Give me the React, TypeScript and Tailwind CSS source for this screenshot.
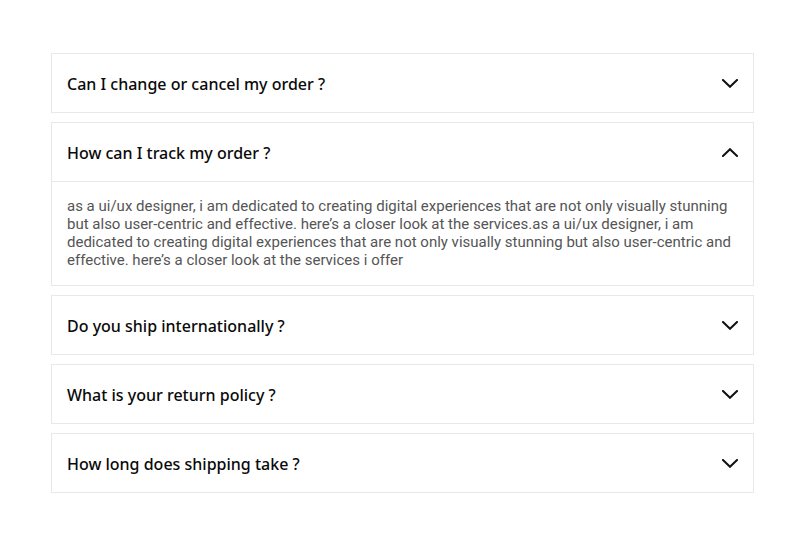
import React, { useState } from 'react';

interface FaqItem {
  question: string;
  answer: string;
}

const faqs: FaqItem[] = [
  {
    question: 'Can I change or cancel my order ?',
    answer:
      "as a ui/ux designer, i am dedicated to creating digital experiences that are not only visually stunning but also user-centric and effective. here's a closer look at the services i offer",
  },
  {
    question: 'How can I track my order ?',
    answer:
      "as a ui/ux designer, i am dedicated to creating digital experiences that are not only visually stunning but also user-centric and effective. here’s a closer look at the services.as a ui/ux designer, i am dedicated to creating digital experiences that are not only visually stunning but also user-centric and effective. here’s a closer look at the services i offer",
  },
  {
    question: 'Do you ship internationally ?',
    answer:
      "as a ui/ux designer, i am dedicated to creating digital experiences that are not only visually stunning but also user-centric and effective.",
  },
  {
    question: 'What is your return policy ?',
    answer:
      "as a ui/ux designer, i am dedicated to creating digital experiences that are not only visually stunning but also user-centric and effective.",
  },
  {
    question: 'How long does shipping take ?',
    answer:
      "as a ui/ux designer, i am dedicated to creating digital experiences that are not only visually stunning but also user-centric and effective.",
  },
];

function Chevron({ up }: { up: boolean }) {
  return (
    <svg width="16" height="9" viewBox="0 0 16 9" fill="none" className="shrink-0">
      <path
        d={up ? 'M1 8L8 1.2L15 8' : 'M1 1L8 7.8L15 1'}
        stroke="#111"
        strokeWidth="2"
        strokeLinecap="square"
      />
    </svg>
  );
}

export default function App() {
  // second question starts opened, like the screenshot
  const [open, setOpen] = useState<number | null>(1);

  return (
    <div className="min-h-[539px] bg-white pt-[53px]">
      <div className="ml-[51px] flex w-[703px] flex-col gap-[9px]">
        {faqs.map((faq, i) => {
          const isOpen = open === i;
          return (
            <div key={faq.question} className="border border-[#e8e8e8] bg-white">
              <button
                type="button"
                onClick={() => setOpen(isOpen ? null : i)}
                className="flex h-[58px] w-full items-center justify-between pl-[15px] pr-[15px] pt-[1px] text-left"
              >
                <span
                  className="text-[16px] font-medium text-[#0a0a0a]"
                  style={{ fontFamily: '"Noto Sans", "Open Sans", sans-serif' }}
                >
                  {faq.question}
                </span>
                <Chevron up={isOpen} />
              </button>
              {isOpen && (
                <div className="border-t border-[#e8e8e8] px-[15px] pb-[16px] pt-[15px]">
                  <p
                    className="text-[15px] leading-[18px] text-[#555]"
                    style={{ fontFamily: 'Roboto, sans-serif' }}
                  >
                    {faq.answer}
                  </p>
                </div>
              )}
            </div>
          );
        })}
      </div>
    </div>
  );
}
